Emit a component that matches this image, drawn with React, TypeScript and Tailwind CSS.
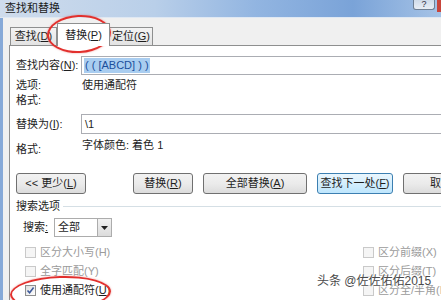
import type { ReactNode } from "react"

const K = ({ children }: { children: ReactNode }) => <u className="underline-offset-[1px]">{children}</u>

function Check({ label, checked = false, disabled = false }: { label: ReactNode; checked?: boolean; disabled?: boolean }) {
  return (
    <div className="flex h-[19px] items-center">
      <span
        className={`flex size-[11px] items-center justify-center border ${
          disabled ? "border-[#c9c9c9] bg-[#f5f5f5]" : "border-[#8e8f8f] bg-gradient-to-br from-[#dedede] to-white"
        }`}
      >
        {checked && (
          <svg width="9" height="9" viewBox="0 0 9 9">
            <path d="M1.5 4.5 L3.6 6.8 L7.6 1.6" fill="none" stroke="#3d5a9a" strokeWidth="1.6" />
          </svg>
        )}
      </span>
      <span className={`ml-[4px] ${disabled ? "text-[#9b9b9b]" : "text-[#1e1e1e]"}`}>{label}</span>
    </div>
  )
}

function Btn({ children, w, primary = false }: { children: ReactNode; w: string; primary?: boolean }) {
  return (
    <div
      className={`flex h-[21px] shrink-0 items-center justify-center rounded-[3px] border ${w} ${
        primary
          ? "border-[#3c7fb1] bg-gradient-to-b from-[#eaf6fd] to-[#bee6fd]"
          : "border-[#707070] bg-gradient-to-b from-[#f2f2f2] via-[#ebebeb] to-[#dcdcdc]"
      }`}
    >
      {children}
    </div>
  )
}

export default function App() {
  return (
    <div className="relative flex h-[300px] w-[441px] flex-col overflow-hidden bg-[#f0f0f0] font-['Liberation_Sans','Noto_Sans_CJK_SC',sans-serif] text-[11px] leading-none text-[#1e1e1e]">
      {/* title bar */}
      <div className="flex h-[18px] shrink-0 border-b border-[#dfe8f3] bg-[linear-gradient(90deg,#cfdcec_0%,#b9cfe9_35%,#92b5e1_58%,#7aa3d8_80%,#a6c3e6_100%)]">
        <span className="self-center pl-[5px] text-[11px] text-[#1b1b1b]">查找和替换</span>
        <div className="ml-auto flex items-start gap-[2px]">
          <div className="flex h-[10px] w-[22px] items-end justify-center rounded-b-[3px] border border-t-0 border-[#6e7f93] bg-gradient-to-b from-[#cfdbe9] to-[#e8eef5] text-[9px] leading-none text-[#334]">
            ?
          </div>
          <div className="h-[12px] w-[4px] bg-[#c8453b]" />
        </div>
      </div>

      {/* body */}
      <div className="flex-1 border-l-[3px] border-[#86a9d8] pl-[6px] pt-[5px]">
        <div className="w-[480px]">
          {/* tabs */}
          <div className="ml-[1px] flex h-[22px] items-end">
            <div className="flex h-[18px] w-[47px] items-center justify-center border border-b-0 border-[#8e8f8f] bg-gradient-to-b from-[#f3f3f3] to-[#e3e3e3]">
              查找(<K>D</K>)
            </div>
            <div className="relative z-10 -mb-px flex h-[23px] w-[53px] items-center justify-center border border-b-0 border-[#8e8f8f] bg-white">
              替换(<K>P</K>)
            </div>
            <div className="flex h-[18px] w-[43px] items-center justify-center border border-b-0 border-l-0 border-[#8e8f8f] bg-gradient-to-b from-[#f3f3f3] to-[#e3e3e3]">
              定位(<K>G</K>)
            </div>
          </div>

          {/* panel */}
          <div className="h-[300px] border border-[#8e8f8f] bg-white pl-[6px]">
            <div className="mt-[10px] flex h-[19px] items-center">
              <span className="w-[65px]">
                查找内容(<K>N</K>):
              </span>
              <div className="flex h-[19px] flex-1 items-center border border-[#abadb3] pl-[2px]">
                <span className="bg-[#a9cdf0] px-px py-[2px] text-[#1b4f9c]">( ( [ABCD] ) )</span>
              </div>
            </div>

            <div className="mt-[3px] flex h-[14px] items-center">
              <span className="w-[66px]">选项:</span>
              <span>使用通配符</span>
            </div>
            <div className="mt-px flex h-[14px] items-center">
              <span className="w-[66px]">格式:</span>
            </div>

            <div className="mt-[7px] flex h-[20px] items-center">
              <span className="w-[65px]">
                替换为(<K>I</K>):
              </span>
              <div className="flex h-[20px] flex-1 items-center border border-[#abadb3] pl-[3px]">\1</div>
            </div>

            <div className="mt-[4px] flex h-[18px] items-start">
              <span className="mt-[4px] flex h-[14px] w-[66px] items-center">格式:</span>
              <span className="flex h-[14px] items-center">字体颜色: 着色 1</span>
            </div>

            {/* buttons */}
            <div className="mt-[17px] flex items-center">
              <Btn w="w-[70px]">
                &lt;&lt; 更少(<K>L</K>)
              </Btn>
              <div className="ml-[47px] flex gap-[10px]">
                <Btn w="w-[60px]">
                  替换(<K>R</K>)
                </Btn>
                <Btn w="w-[104px]">
                  全部替换(<K>A</K>)
                </Btn>
                <Btn w="w-[76px]" primary>
                  查找下一处(<K>F</K>)
                </Btn>
                <Btn w="w-[76px]">取消</Btn>
              </div>
            </div>

            {/* search options */}
            <div className="mt-[5px] flex h-[14px] items-center">
              <span>搜索选项</span>
              <div className="ml-[3px] h-px flex-1 bg-[#d5dfe5]" />
            </div>

            <div className="mt-[5px] flex h-[19px] items-center pl-[7px]">
              <span className="w-[31px]">
                搜索<K>:</K>
              </span>
              <div className="flex h-[19px] w-[58px] items-center border border-[#acacac] pl-[3px]">
                <span className="flex-1">全部</span>
                <div className="flex h-full w-[14px] items-center justify-center border-l border-[#acacac] bg-gradient-to-b from-[#f2f2f2] to-[#dcdcdc]">
                  <svg width="7" height="4" viewBox="0 0 7 4">
                    <path d="M0 0 H7 L3.5 4 Z" fill="#222" />
                  </svg>
                </div>
              </div>
            </div>

            <div className="mt-[6px] flex pl-[9px]">
              <div className="w-[338px]">
                <Check disabled label="区分大小写(H)" />
                <Check disabled label="全字匹配(Y)" />
                <Check checked label={<>使用通配符(<K>U</K>)</>} />
              </div>
              <div>
                <Check disabled label="区分前缀(X)" />
                <Check disabled label="区分后缀(T)" />
                <Check disabled label="区分全/半角(M)" />
              </div>
            </div>
          </div>
        </div>
      </div>

      {/* annotation circles */}
      <div className="absolute left-[47px] top-[15px] h-[38px] w-[64px] -rotate-3 rounded-[50%] border-2 border-[#e2302d] shadow-[0_0_2px_rgba(226,48,45,0.5)]" />
      <div className="absolute left-[10px] top-[276px] h-[34px] w-[101px] -rotate-2 rounded-[50%] border-2 border-[#e2302d] shadow-[0_0_2px_rgba(226,48,45,0.5)]" />

      {/* watermark */}
      <div className="absolute left-[317px] top-[275px] text-[12px] text-[#4a4a4a] [text-shadow:0_0_2px_#fff,0_0_2px_#fff,0_0_3px_#fff]">
        头条 @佐佐佑佑2015
      </div>
    </div>
  )
}
